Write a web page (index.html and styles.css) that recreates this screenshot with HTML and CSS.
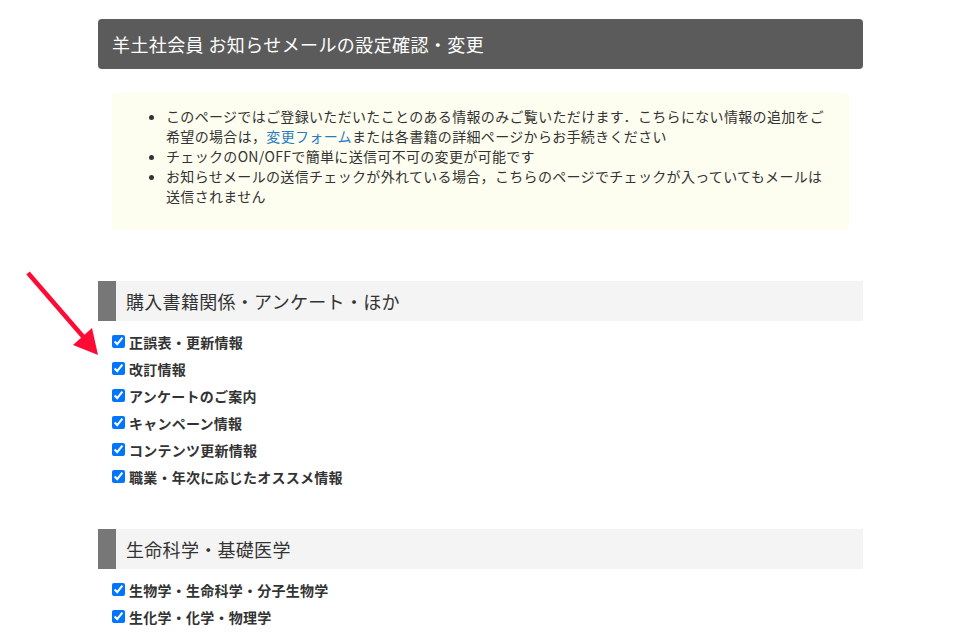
FILE: index.html
```html
<!DOCTYPE html>
<html lang="ja">
<head>
<meta charset="utf-8">
<title>お知らせメールの設定確認・変更</title>
<link rel="stylesheet" href="styles.css">
</head>
<body>
<div class="page">
  <h1 class="title">羊土社会員 お知らせメールの設定確認・変更</h1>
  <div class="note">
    <ul>
      <li>このページではご登録いただいたことのある情報のみご覧いただけます．こちらにない情報の追加をご希望の場合は，<a href="#">変更フォーム</a>または各書籍の詳細ページからお手続きください</li>
      <li>チェックのON/OFFで簡単に送信可不可の変更が可能です</li>
      <li>お知らせメールの送信チェックが外れている場合，こちらのページでチェックが入っていてもメールは送信されません</li>
    </ul>
  </div>

  <section class="group">
    <h2 class="group-title">購入書籍関係・アンケート・ほか</h2>
    <ul class="checks">
      <li><label><input type="checkbox" checked>正誤表・更新情報</label></li>
      <li><label><input type="checkbox" checked>改訂情報</label></li>
      <li><label><input type="checkbox" checked>アンケートのご案内</label></li>
      <li><label><input type="checkbox" checked>キャンペーン情報</label></li>
      <li><label><input type="checkbox" checked>コンテンツ更新情報</label></li>
      <li><label><input type="checkbox" checked>職業・年次に応じたオススメ情報</label></li>
    </ul>
  </section>

  <section class="group">
    <h2 class="group-title">生命科学・基礎医学</h2>
    <ul class="checks">
      <li><label><input type="checkbox" checked>生物学・生命科学・分子生物学</label></li>
      <li><label><input type="checkbox" checked>生化学・化学・物理学</label></li>
    </ul>
  </section>
</div>

<svg class="arrow" width="110" height="100" viewBox="0 0 110 100" aria-hidden="true">
  <line x1="28" y1="13" x2="86" y2="80" stroke="#fe0a35" stroke-width="4.5" stroke-linecap="butt"/>
  <polygon points="98,95 73,85 92,68" fill="#fe0a35"/>
</svg>
</body>
</html>
```
FILE: styles.css
```css
html, body {
  margin: 0;
  padding: 0;
  height: 633px;
  overflow: hidden;
  background: #ffffff;
}

body {
  font-family: "Noto Sans CJK JP", "Noto Sans", sans-serif;
  color: #333333;
  position: relative;
}

.page {
  width: 765px;
  margin: 0 auto;
  padding-top: 19px;
}

.title {
  margin: 0;
  height: 50px;
  display: flex;
  align-items: center;
  padding-left: 14px;
  background: #5b5b5b;
  color: #ffffff;
  font-size: 18px;
  font-weight: normal;
  letter-spacing: 0.4px;
  border-radius: 4px;
}

.note {
  margin: 24px 14px 0;
  background: #fefef0;
  border-radius: 3px;
  padding: 13px 0 24px;
  height: 100px;
}

.note ul {
  margin: 0;
  padding: 0 14px 0 54px;
  font-size: 14px;
  line-height: 20px;
  letter-spacing: 0.33px;
}

.note a {
  display: inline-block;
  height: 20px;
  color: #2b7bc0;
  text-decoration: none;
}

.group {
  margin-top: 51px;
}

.group + .group {
  margin-top: 39px;
}

.group-title {
  margin: 0;
  height: 40px;
  display: flex;
  align-items: center;
  background: #f4f4f4;
  border-left: 18px solid #777777;
  padding-left: 10px;
  font-size: 18px;
  font-weight: normal;
  letter-spacing: 0.3px;
  color: #333333;
}

.checks {
  list-style: none;
  margin: 0;
  padding: 7px 0 0 14px;
}

.checks li {
  height: 27px;
  display: flex;
  align-items: center;
}

.checks label {
  display: flex;
  align-items: center;
  font-size: 14px;
  font-weight: bold;
  letter-spacing: 0.25px;
  color: #333333;
}

.checks input {
  width: 13px;
  height: 13px;
  margin: 0 4px 0 0;
}

.arrow {
  position: absolute;
  left: 0;
  top: 260px;
}
```
